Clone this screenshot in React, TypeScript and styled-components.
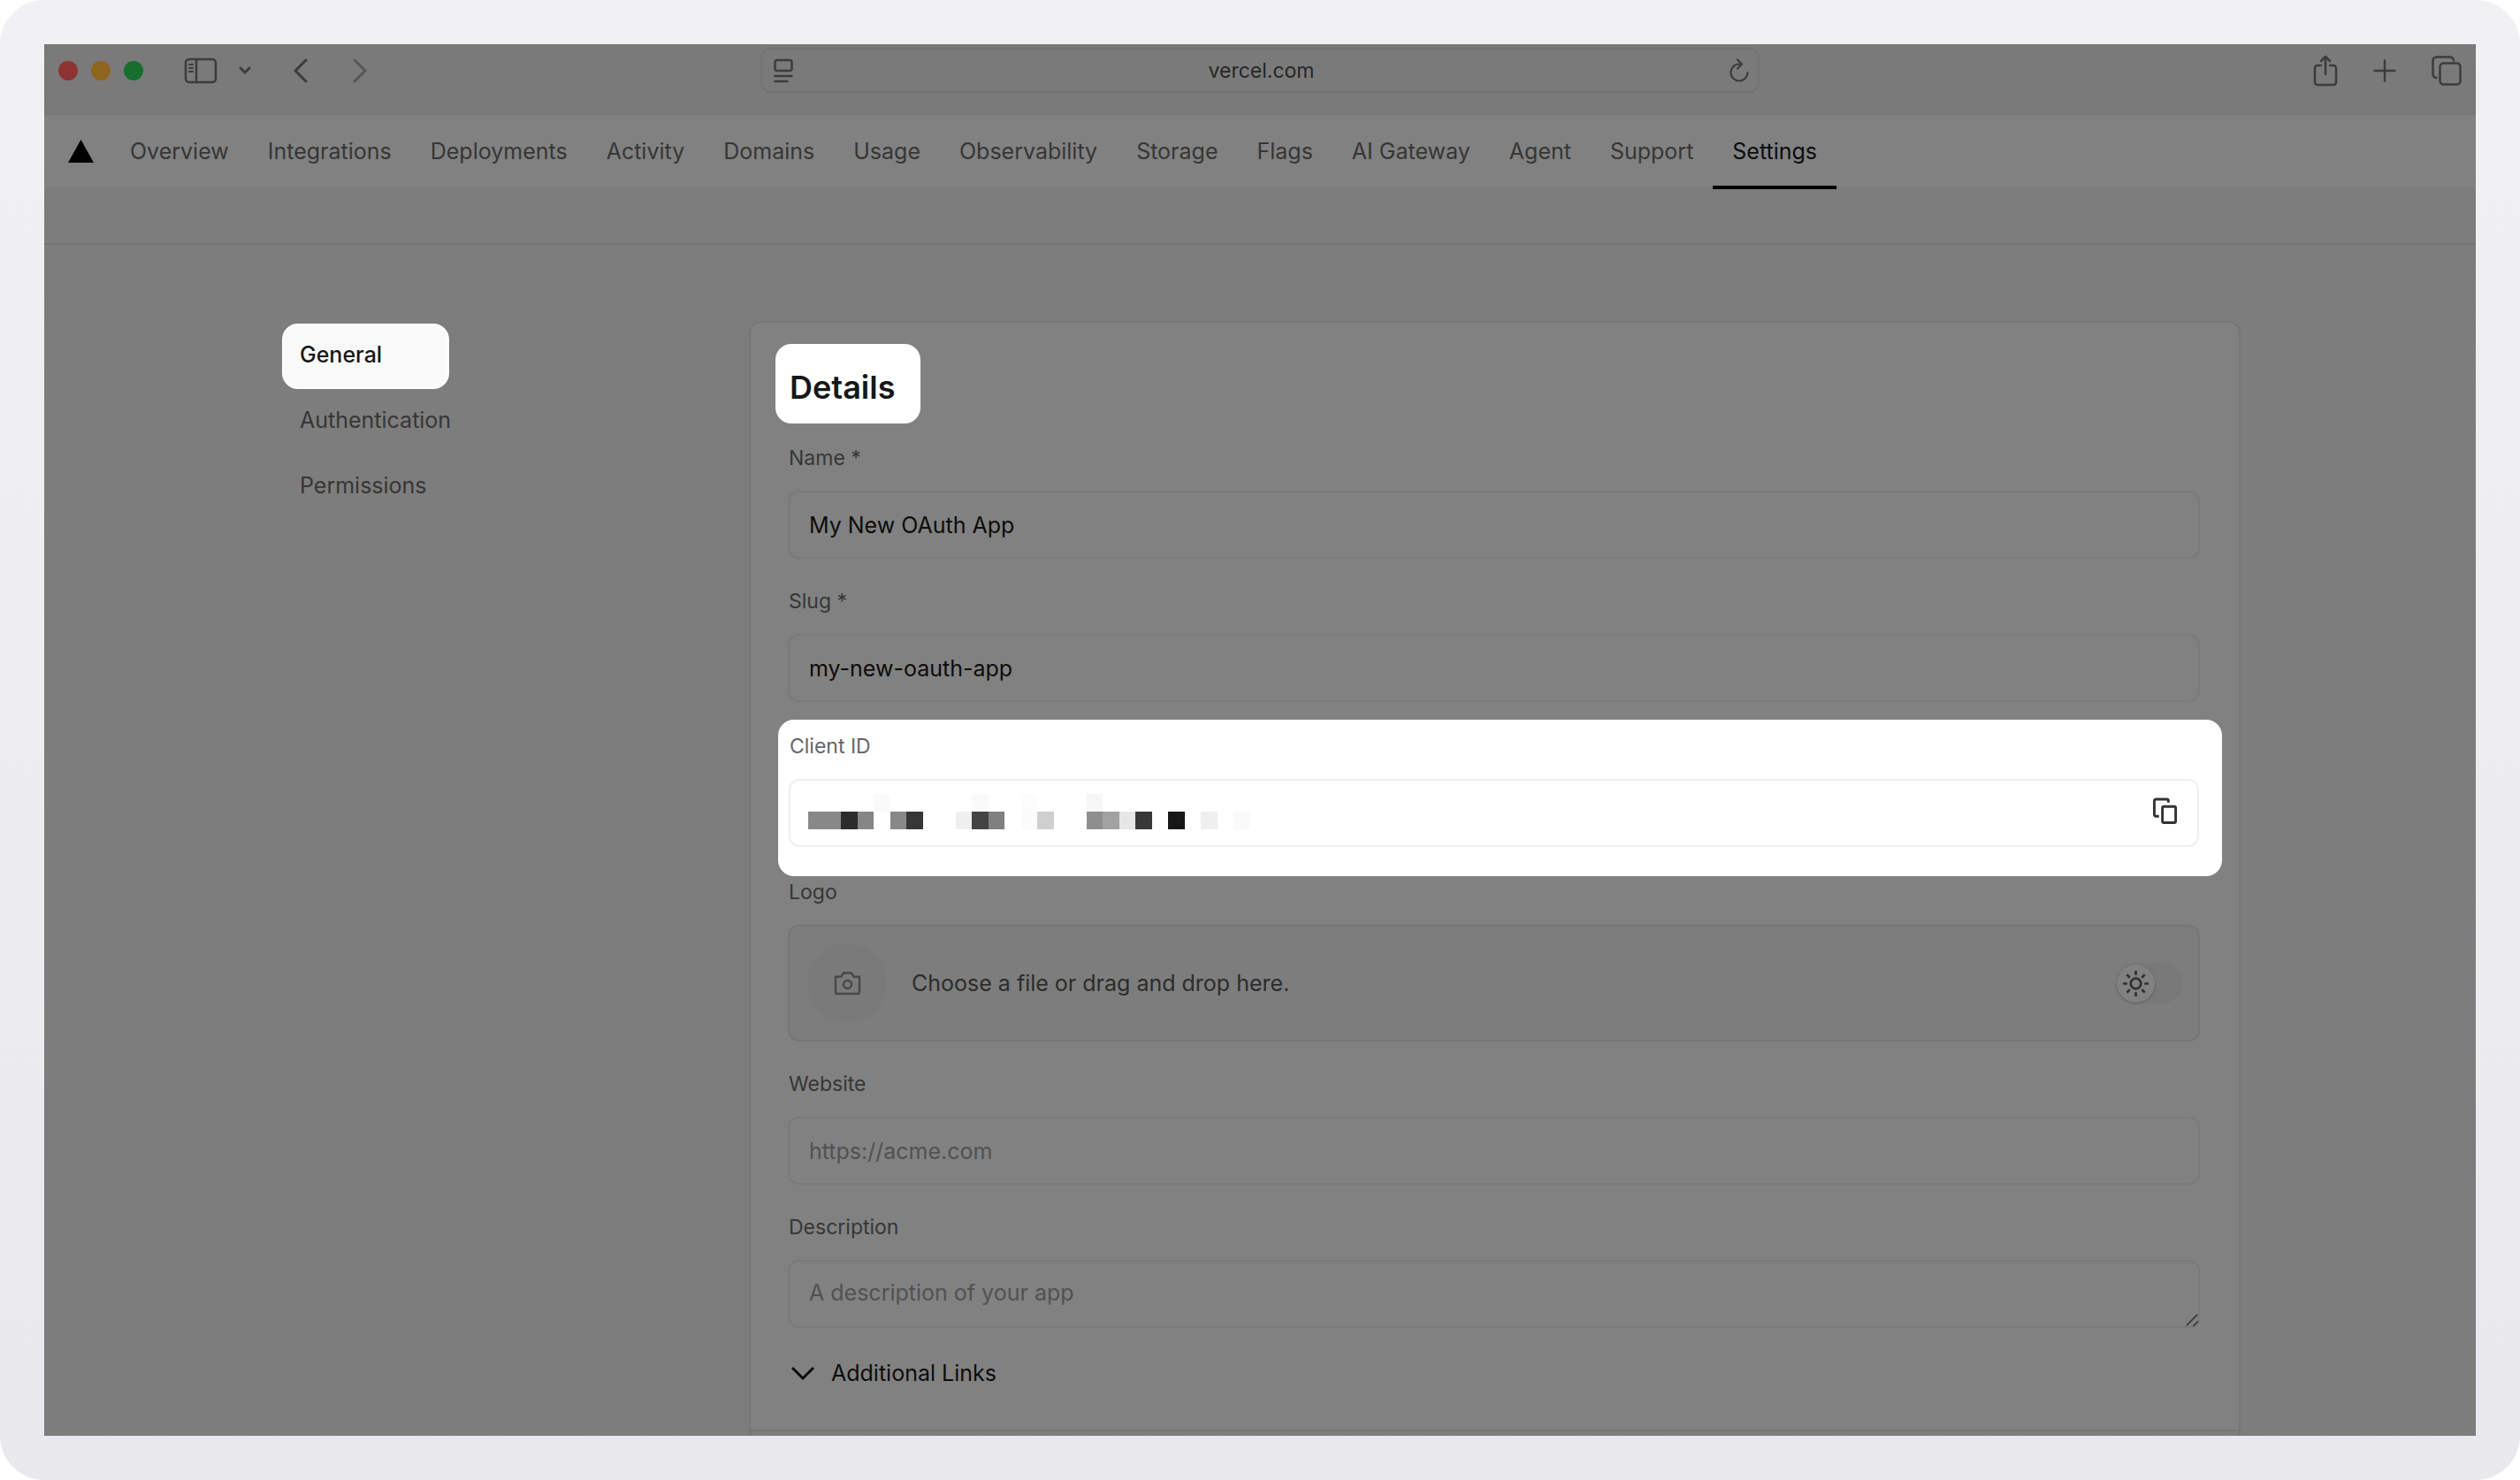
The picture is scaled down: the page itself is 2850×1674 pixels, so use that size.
import React from "react";
import styled, { createGlobalStyle } from "styled-components";

const GlobalStyle = createGlobalStyle`
  *, *::before, *::after { box-sizing: border-box; }
  body { margin: 0; background: #fff; }
  body, button, input, textarea { font-family: Inter, "Liberation Sans", sans-serif; font-size: 25px; }
  button { border: 0; padding: 0; background: none; color: inherit; cursor: pointer; }
  svg { display: block; flex: none; }
`;

const color = {
  chrome: "#7a7a7a",
  surface: "#818181",
  page: "#7d7d7d",
  line: "#767676",
  fieldLine: "#7a7a7a",
  text: "#0c0c0c",
  muted: "#363636",
  faint: "#515151",
};

const Frame = styled.div`
  min-height: 100vh;
  display: flex;
  padding: 50px;
  border-radius: 50px;
  background: linear-gradient(#f1f1f3, #e9e9ed);
`;

const Window = styled.div`
  flex: 1;
  min-width: 0;
  display: flex;
  flex-direction: column;
  overflow: hidden;
  background: ${color.page};
`;

const Toolbar = styled.header`
  display: grid;
  grid-template-columns: 1fr minmax(0, 1130px) 1fr;
  align-items: center;
  padding: 4px 0 23px;
  background: ${color.chrome};
  border-bottom: 2px solid ${color.line};
  color: #3c3c3c;
`;

const ToolGroup = styled.div<{ $end?: boolean }>`
  display: flex;
  align-items: center;
  justify-content: ${(p) => (p.$end ? "flex-end" : "flex-start")};
  gap: ${(p) => (p.$end ? "40px" : "0")};
  padding: ${(p) => (p.$end ? "0 16px 0 0" : "0 0 0 16px")};
`;

const Lights = styled.div`
  display: flex;
  gap: 15px;
  margin-right: 46px;
`;

const Light = styled.button<{ $tone: string }>`
  width: 22px;
  height: 22px;
  border-radius: 50%;
  background: ${(p) => p.$tone};
`;

const ToolButton = styled.button<{ $after?: number; $dim?: boolean }>`
  margin-right: ${(p) => p.$after ?? 0}px;
  opacity: ${(p) => (p.$dim ? 0.55 : 1)};
`;

const Address = styled.div`
  height: 51px;
  display: flex;
  align-items: center;
  padding: 0 10px 0 13px;
  border: 2px solid #737373;
  border-radius: 12px;
`;

const AddressInput = styled.input`
  flex: 1;
  min-width: 0;
  border: 0;
  background: none;
  text-align: center;
  font-size: 23px;
  color: #262626;
  outline: none;
`;

const Nav = styled.nav`
  display: flex;
  align-items: stretch;
  height: 84px;
  padding-left: 27px;
  background: ${color.surface};
  border-bottom: 2px solid #7b7b7b;
`;

const Home = styled.a`
  display: flex;
  align-items: center;
  margin-right: 19px;
`;

const NavLink = styled.a<{ $active?: boolean }>`
  display: flex;
  align-items: center;
  margin-bottom: -2px;
  padding: 2px 22px 0;
  text-decoration: none;
  white-space: nowrap;
  color: ${(p) => (p.$active ? color.text : color.muted)};
  border-bottom: 4px solid ${(p) => (p.$active ? "#000" : "transparent")};
`;

const SubBar = styled.div`
  height: 63px;
  border-bottom: 2px solid #757575;
`;

const Main = styled.main`
  flex: 1;
  display: flex;
  padding: 86px 266px 0 269px;
`;

const Side = styled.nav`
  width: 528px;
  flex: none;
  padding-top: 3px;
`;

const SideLink = styled.a<{ $active?: boolean }>`
  display: flex;
  align-items: center;
  width: 189px;
  height: 74px;
  padding: 0 0 4px 18px;
  border: 2px solid transparent;
  border-radius: 18px;
  text-decoration: none;
  font-weight: ${(p) => (p.$active ? 500 : 400)};
  color: ${(p) => (p.$active ? "#171717" : color.muted)};
  background: ${(p) => (p.$active ? "#f9f9f9" : "none")};
  border-color: ${(p) => (p.$active ? "#fff" : "transparent")};
`;

const Card = styled.section`
  flex: 1;
  min-width: 0;
  display: flex;
  flex-direction: column;
  border: 2px solid ${color.line};
  border-bottom: 0;
  border-radius: 14px 14px 0 0;
`;

const CardBody = styled.form`
  display: flex;
  flex-direction: column;
  align-items: stretch;
  gap: 33px;
  padding: 24px 44px 46px 42px;
  background: ${color.surface};
  border-radius: 12px 12px 0 0;
`;

const CardFooter = styled.div`
  flex: 1;
  min-height: 6px;
  border-top: 2px solid ${color.line};
`;

const Title = styled.h2`
  align-self: flex-start;
  margin: 0 0 -9px -14px;
  padding: 27px 29px 19px 16px;
  border-radius: 18px;
  background: #fff;
  color: #171717;
  font-size: 36px;
  line-height: 44px;
  font-weight: 600;
`;

const Field = styled.div<{ $spot?: boolean }>`
  display: flex;
  flex-direction: column;
  gap: 22px;
  ${(p) =>
    p.$spot &&
    `
    margin: -13px -25px -30px -11px;
    padding: 15px 26px 33px 12px;
    background: #fff;
    border-radius: 18px;
  `}
`;

const Label = styled.label<{ $lit?: boolean }>`
  padding-left: 1px;
  font-size: 23px;
  line-height: 30px;
  color: ${(p) => (p.$lit ? "#666" : color.muted)};
`;

const TextInput = styled.input`
  width: 100%;
  height: 77px;
  padding: 0 22px;
  border: 2px solid ${color.fieldLine};
  border-radius: 12px;
  background: none;
  color: ${color.text};
  outline: none;
  &::placeholder { color: ${color.faint}; }
`;

const AreaWrap = styled.div`
  position: relative;
  display: flex;
`;

const TextArea = styled.textarea`
  flex: 1;
  height: 77px;
  padding: 20px 22px;
  line-height: 30px;
  border: 2px solid ${color.fieldLine};
  border-radius: 12px;
  background: none;
  resize: none;
  overflow: hidden;
  outline: none;
  &::placeholder { color: ${color.faint}; }
`;

const Grip = styled.svg`
  position: absolute;
  right: 1px;
  bottom: 1px;
`;

const ClientBox = styled.div`
  height: 77px;
  display: flex;
  align-items: center;
  justify-content: space-between;
  padding: 0 22px 4px 20px;
  border: 2px solid #efefef;
  border-radius: 12px;
  color: #333;
`;

const ClientValue = styled.output`
  display: block;
`;

const DropZone = styled.div`
  height: 132px;
  display: flex;
  align-items: center;
  padding: 0 18px 0 20px;
  border: 2px solid ${color.line};
  border-radius: 12px;
  background: ${color.page};
`;

const DropLabel = styled.label`
  flex: 1;
  display: flex;
  align-items: center;
  gap: 28px;
  color: #2c2c2c;
  cursor: pointer;
`;

const HiddenFile = styled.input`
  position: absolute;
  width: 1px;
  height: 1px;
  opacity: 0;
`;

const CameraDisc = styled.span`
  width: 90px;
  height: 90px;
  display: grid;
  place-items: center;
  border-radius: 50%;
  background: #7a7a7a;
  color: #484848;
`;

const Switch = styled.label`
  position: relative;
  width: 74px;
  height: 46px;
  display: flex;
  align-items: center;
  border-radius: 23px;
  background: #797979;
  color: #303030;
`;

const SwitchInput = styled.input`
  position: absolute;
  inset: 0;
  margin: 0;
  opacity: 0;
`;

const Thumb = styled.span`
  width: 43px;
  height: 43px;
  display: grid;
  place-items: center;
  border-radius: 50%;
  background: ${color.surface};
  box-shadow: 0 1px 3px #5c5c5c;
`;

const Disclosure = styled.button`
  align-self: flex-start;
  height: 36px;
  display: flex;
  align-items: center;
  gap: 18px;
  padding-left: 3px;
  color: ${color.text};
`;

const tabs = [
  "Overview", "Integrations", "Deployments", "Activity", "Domains", "Usage", "Observability",
  "Storage", "Flags", "AI Gateway", "Agent", "Support", "Settings",
];

// [column, row, shade] of every tile in the masked client id
const tiles: [number, number, string][] = [
  [4, 0, "#fafafa"], [10, 0, "#fafafa"], [13, 0, "#fcfcfc"], [17, 0, "#f6f6f6"],
  [0, 1, "#888"], [1, 1, "#888"], [2, 1, "#2c2c2c"], [3, 1, "#868686"], [5, 1, "#888"],
  [6, 1, "#363636"], [9, 1, "#efefef"], [10, 1, "#444"], [11, 1, "#808080"], [13, 1, "#fbfbfb"],
  [14, 1, "#cfcfcf"], [17, 1, "#8e8e8e"], [18, 1, "#a2a2a2"], [19, 1, "#e6e6e6"],
  [20, 1, "#383838"], [22, 1, "#171717"], [24, 1, "#efefef"], [26, 1, "#fafafa"],
];

const MaskedId = () => (
  <svg width="500" height="40" viewBox="0 0 27 2" preserveAspectRatio="none" shapeRendering="crispEdges" aria-label="Hidden client id">
    {tiles.map(([x, y, fill]) => (
      <rect key={`${x}-${y}`} x={x} y={y} width="1" height="1" fill={fill} />
    ))}
  </svg>
);

const stroke = { fill: "none", stroke: "currentColor", strokeLinecap: "round", strokeLinejoin: "round" } as const;

export default function App() {
  return (
    <Frame>
      <GlobalStyle />
      <Window>
        <Toolbar>
          <ToolGroup>
            <Lights>
              <Light $tone="#8f3232" aria-label="Close" />
              <Light $tone="#8e651f" aria-label="Minimize" />
              <Light $tone="#186e2c" aria-label="Zoom" />
            </Lights>
            <ToolButton $after={24} aria-label="Sidebar">
              <svg width="38" height="30" viewBox="0 0 38 30" {...stroke} strokeWidth="2.5">
                <rect x="2" y="2" width="34" height="26" rx="4" />
                <path d="M14 2v26" />
                <path d="M6 8h4M6 12h4M6 16h4" strokeWidth="2" />
              </svg>
            </ToolButton>
            <ToolButton $after={47} aria-label="Tab groups">
              <svg width="14" height="10" viewBox="0 0 14 10" {...stroke} strokeWidth="3">
                <path d="M2 2l5 5 5-5" />
              </svg>
            </ToolButton>
            <ToolButton $after={49} aria-label="Back">
              <svg width="18" height="28" viewBox="0 0 18 28" {...stroke} strokeWidth="3">
                <path d="M15 2L3 14l12 12" />
              </svg>
            </ToolButton>
            <ToolButton $dim aria-label="Forward">
              <svg width="18" height="28" viewBox="0 0 18 28" {...stroke} strokeWidth="3">
                <path d="M3 2l12 12L3 26" />
              </svg>
            </ToolButton>
          </ToolGroup>
          <Address>
            <ToolButton aria-label="Reader">
              <svg width="22" height="28" viewBox="0 0 22 28" {...stroke} strokeWidth="2.5">
                <rect x="1.5" y="2" width="19" height="12" rx="2.5" />
                <path d="M1.5 20h19M1.5 26h14" />
              </svg>
            </ToolButton>
            <AddressInput aria-label="Address" defaultValue="vercel.com" />
            <ToolButton aria-label="Reload">
              <svg width="22" height="28" viewBox="0 0 22 28" {...stroke} strokeWidth="2.2">
                <path d="M11 6.500a9.500 9.500 0 1 0 9.500 9.500M9 1.500l5 5-5 5" />
              </svg>
            </ToolButton>
          </Address>
          <ToolGroup $end>
            <ToolButton aria-label="Share">
              <svg width="28" height="36" viewBox="0 0 28 36" {...stroke} strokeWidth="2.5">
                <path d="M9 12H5a3 3 0 0 0-3 3v16a3 3 0 0 0 3 3h18a3 3 0 0 0 3-3V15a3 3 0 0 0-3-3h-4M14 22V2M9 7l5-5 5 5" />
              </svg>
            </ToolButton>
            <ToolButton aria-label="New tab">
              <svg width="26" height="26" viewBox="0 0 26 26" {...stroke} strokeWidth="2.5">
                <path d="M13 1.500v23M1.500 13h23" />
              </svg>
            </ToolButton>
            <ToolButton aria-label="Tab overview">
              <svg width="34" height="34" viewBox="0 0 34 34" {...stroke} strokeWidth="2.5">
                <rect x="9.500" y="8.500" width="23" height="24" rx="4" />
                <path d="M5.500 25a4 4 0 0 1-4-4V5.500a4 4 0 0 1 4-4H21a4 4 0 0 1 4 4" />
              </svg>
            </ToolButton>
          </ToolGroup>
        </Toolbar>

        <Nav aria-label="Team">
          <Home href="#" aria-label="Home">
            <svg width="29" height="26" viewBox="0 0 29 26"><path d="M14.500 0L29 26H0z" /></svg>
          </Home>
          {tabs.map((t) => (
            <NavLink key={t} href="#" $active={t === "Settings"}>{t}</NavLink>
          ))}
        </Nav>
        <SubBar />

        <Main>
          <Side aria-label="Settings">
            <SideLink href="#" $active>General</SideLink>
            <SideLink href="#">Authentication</SideLink>
            <SideLink href="#">Permissions</SideLink>
          </Side>
          <Card>
            <CardBody>
              <Title>Details</Title>
              <Field>
                <Label htmlFor="name">Name *</Label>
                <TextInput id="name" defaultValue="My New OAuth App" />
              </Field>
              <Field>
                <Label htmlFor="slug">Slug *</Label>
                <TextInput id="slug" defaultValue="my-new-oauth-app" />
              </Field>
              <Field $spot>
                <Label htmlFor="client" $lit>Client ID</Label>
                <ClientBox>
                  <ClientValue id="client"><MaskedId /></ClientValue>
                  <button type="button" aria-label="Copy client ID">
                    <svg width="29" height="31" viewBox="0 0 30 32" fill="none" stroke="currentColor" strokeWidth="3">
                      <rect x="12" y="10.500" width="15.500" height="19" rx="1.500" />
                      <path d="M8 22H4.500A2 2 0 0 1 2.500 20V4a2 2 0 0 1 2-2H17a2 2 0 0 1 2 2v2" />
                    </svg>
                  </button>
                </ClientBox>
              </Field>
              <Field>
                <Label htmlFor="logo">Logo</Label>
                <DropZone>
                  <HiddenFile id="logo" type="file" />
                  <DropLabel htmlFor="logo">
                    <CameraDisc>
                      <svg width="31" height="27" viewBox="0 0 32 28" fill="none" stroke="currentColor" strokeWidth="2.5">
                        <path d="M2 6h6.500l3-4.500h9l3 4.500H30v18a2 2 0 0 1-2 2H4a2 2 0 0 1-2-2z" />
                        <circle cx="16" cy="15" r="4.700" />
                      </svg>
                    </CameraDisc>
                    Choose a file or drag and drop here.
                  </DropLabel>
                  <Switch>
                    <SwitchInput type="checkbox" role="switch" aria-label="Dark logo" />
                    <Thumb>
                      <svg width="29" height="29" viewBox="0 0 30 30" {...stroke} strokeLinecap="butt" strokeWidth="2.8">
                        <circle cx="15" cy="15" r="6" />
                        <path d="M15 0v5M15 25v5M0 15h5M25 15h5M4.500 4.500L8 8M22 22l3.500 3.500M4.500 25.500L8 22M22 8l3.500-3.500" />
                      </svg>
                    </Thumb>
                  </Switch>
                </DropZone>
              </Field>
              <Field>
                <Label htmlFor="website">Website</Label>
                <TextInput id="website" placeholder="https://acme.com" />
              </Field>
              <Field>
                <Label htmlFor="description">Description</Label>
                <AreaWrap>
                  <TextArea id="description" placeholder="A description of your app" />
                  <Grip width="15" height="15" viewBox="0 0 16 16" fill="none" stroke="#3c3c3c" strokeWidth="2">
                    <path d="M1 14L14 1M9 15l6-6" />
                  </Grip>
                </AreaWrap>
              </Field>
              <Disclosure type="button">
                <svg width="28" height="18" viewBox="0 0 28 18" fill="none" stroke="currentColor" strokeWidth="3">
                  <path d="M2 3l12 12L26 3" />
                </svg>
                Additional Links
              </Disclosure>
            </CardBody>
            <CardFooter />
          </Card>
        </Main>
      </Window>
    </Frame>
  );
}
